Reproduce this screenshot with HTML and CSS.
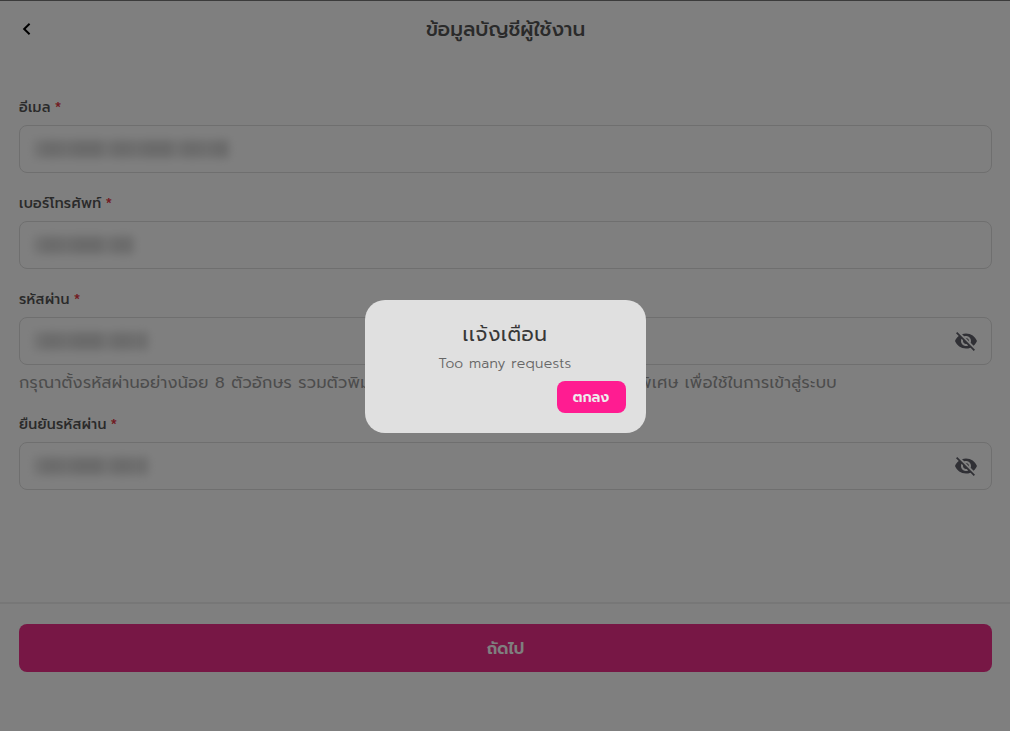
FILE: index.html
```html
<!DOCTYPE html>
<html lang="th">
<head>
  <meta charset="UTF-8" />
  <meta name="viewport" content="width=device-width, initial-scale=1.0"/>
  <title>ข้อมูลบัญชีผู้ใช้งาน</title>
  <link rel="stylesheet" href="styles.css">
</head>
<body>
  <div class="page">
    <header class="header">
      <svg class="back" viewBox="0 0 16 16"><path d="M10.6 2.8 5.2 8l5.4 5.2"/></svg>
      <h1>ข้อมูลบัญชีผู้ใช้งาน</h1>
    </header>

    <form class="form">
      <div class="field">
        <label>อีเมล <span class="required">*</span></label>
        <div class="input"><span class="masked masked-email"></span></div>
      </div>

      <div class="field">
        <label>เบอร์โทรศัพท์ <span class="required">*</span></label>
        <div class="input"><span class="masked masked-phone"></span></div>
      </div>

      <div class="field">
        <label>รหัสผ่าน <span class="required">*</span></label>
        <div class="input">
          <span class="masked masked-password"></span>
          <svg class="eye" viewBox="0 0 24 24"><path d="M12 7c2.76 0 5 2.24 5 5 0 .65-.13 1.26-.36 1.83l2.92 2.92c1.51-1.26 2.7-2.89 3.43-4.75-1.73-4.39-6-7.5-11-7.5-1.4 0-2.74.25-3.98.7l2.16 2.16C10.74 7.13 11.35 7 12 7zM2 4.27l2.28 2.28.46.46C3.08 8.3 1.78 10.02 1 12c1.73 4.39 6 7.5 11 7.5 1.55 0 3.03-.3 4.38-.84l.42.42L19.73 22 21 20.73 3.27 3 2 4.27zM7.53 9.8l1.55 1.55c-.05.21-.08.43-.08.65 0 1.66 1.34 3 3 3 .22 0 .44-.03.65-.08l1.55 1.55c-.67.33-1.41.53-2.2.53-2.76 0-5-2.24-5-5 0-.79.2-1.53.53-2.2zm4.31-.78 3.15 3.15.02-.16c0-1.66-1.34-3-3-3l-.17.01z"/></svg>
        </div>
        <p class="hint">
          <span>กรุณาตั้งรหัสผ่านอย่างน้อย 8 ตัวอักษร รวมตัวพิมพ์ใหญ่</span>
          <span>อักขระพิเศษ เพื่อใช้ในการเข้าสู่ระบบ</span>
        </p>
      </div>

      <div class="field">
        <label>ยืนยันรหัสผ่าน <span class="required">*</span></label>
        <div class="input">
          <span class="masked masked-password"></span>
          <svg class="eye" viewBox="0 0 24 24"><path d="M12 7c2.76 0 5 2.24 5 5 0 .65-.13 1.26-.36 1.83l2.92 2.92c1.51-1.26 2.7-2.89 3.43-4.75-1.73-4.39-6-7.5-11-7.5-1.4 0-2.74.25-3.98.7l2.16 2.16C10.74 7.13 11.35 7 12 7zM2 4.27l2.28 2.28.46.46C3.08 8.3 1.78 10.02 1 12c1.73 4.39 6 7.5 11 7.5 1.55 0 3.03-.3 4.38-.84l.42.42L19.73 22 21 20.73 3.27 3 2 4.27zM7.53 9.8l1.55 1.55c-.05.21-.08.43-.08.65 0 1.66 1.34 3 3 3 .22 0 .44-.03.65-.08l1.55 1.55c-.67.33-1.41.53-2.2.53-2.76 0-5-2.24-5-5 0-.79.2-1.53.53-2.2zm4.31-.78 3.15 3.15.02-.16c0-1.66-1.34-3-3-3l-.17.01z"/></svg>
        </div>
      </div>
    </form>

    <footer class="footer">
      <button class="next" type="button">ถัดไป</button>
    </footer>
  </div>

  <!-- Alert dialog -->
  <div class="overlay">
    <div class="modal">
      <h2>เเจ้งเตือน</h2>
      <p>Too many requests</p>
      <button class="confirm" type="button">ตกลง</button>
    </div>
  </div>
</body>
</html>
```
FILE: styles.css
```css
* {
  box-sizing: border-box;
  margin: 0;
  padding: 0;
}

body {
  background: #ffffff;
  color: #555555;
  font-family: 'Prompt', 'Noto Sans Thai', 'Open Sans', sans-serif;
  height: 731px;
  overflow: hidden;
}

.page {
  height: 731px;
  display: flex;
  flex-direction: column;
  border-top: 1px solid #777777;
}

.header {
  display: flex;
  align-items: center;
  height: 56px;
  padding: 0 19px;
}

.back {
  width: 16px;
  height: 16px;
  fill: none;
  stroke: #000000;
  stroke-width: 2;
}

h1 {
  flex: 1;
  margin-right: 15px;
  text-align: center;
  font-size: 20px;
  font-weight: 500;
  line-height: 30px;
}

.form {
  display: flex;
  flex-direction: column;
  gap: 20px;
  height: 545px;
  padding: 40px 18px 0 19px;
}

label {
  display: flex;
  align-items: center;
  gap: 4px;
  height: 20px;
  padding-top: 2px;
  margin-bottom: 8px;
  font-size: 14px;
  font-weight: 500;
  line-height: 20px;
  letter-spacing: 0.3px;
  white-space: nowrap;
}

.required {
  color: #e53945;
  font-size: 15px;
}

.input {
  display: flex;
  align-items: center;
  height: 48px;
  padding: 0 13px 0 10px;
  border: 1px solid #dedede;
  border-radius: 8px;
}

/* values are hidden behind a soft grey smear */
.masked {
  height: 18px;
  margin-left: 3px;
  background: repeating-linear-gradient(90deg, #eaeaea 0 3px, #d8d8d8 12px 25px, #dedede 31px 36px, #d6d6d6 45px 70px);
  filter: blur(4px);
}

.masked-email {
  width: 196px;
}

.masked-phone {
  width: 101px;
}

.masked-password {
  width: 115px;
}

.eye {
  width: 24px;
  height: 24px;
  margin-left: auto;
  fill: #60606a;
}

.hint {
  display: flex;
  justify-content: space-between;
  width: 818px;
  height: 29px;
  padding-top: 6px;
  color: #999999;
  font-size: 16px;
  line-height: 25px;
  letter-spacing: 0.35px;
  white-space: nowrap;
}

.footer {
  flex: 1;
  padding: 20px 18px 0 19px;
  border-top: 2px solid #eeeeee;
}

button {
  border: none;
  color: #ffffff;
  font-family: inherit;
  font-weight: 600;
}

.next {
  width: 100%;
  height: 48px;
  padding-top: 2px;
  border-radius: 8px;
  background: #ee2e8a;
  font-size: 16px;
}

.overlay {
  position: fixed;
  inset: 0;
  display: flex;
  align-items: center;
  justify-content: center;
  padding-top: 2px;
  background: rgba(0, 0, 0, 0.5);
}

.modal {
  display: flex;
  flex-direction: column;
  align-items: center;
  width: 281px;
  height: 133px;
  padding: 18px 20px 20px;
  border-radius: 20px;
  background: #e0e0e0;
}

.modal h2 {
  color: #383838;
  font-size: 20px;
  font-weight: 400;
  line-height: 32px;
  letter-spacing: 0.6px;
}

.modal p {
  margin-top: 4px;
  color: #666666;
  font-size: 14px;
  font-weight: 300;
  line-height: 20px;
  letter-spacing: 0.32px;
}

.confirm {
  align-self: flex-end;
  width: 69px;
  height: 32px;
  margin-top: 7px;
  border-radius: 8px;
  background: #ff1c91;
  color: #eeeeee;
  font-size: 14px;
}
```
